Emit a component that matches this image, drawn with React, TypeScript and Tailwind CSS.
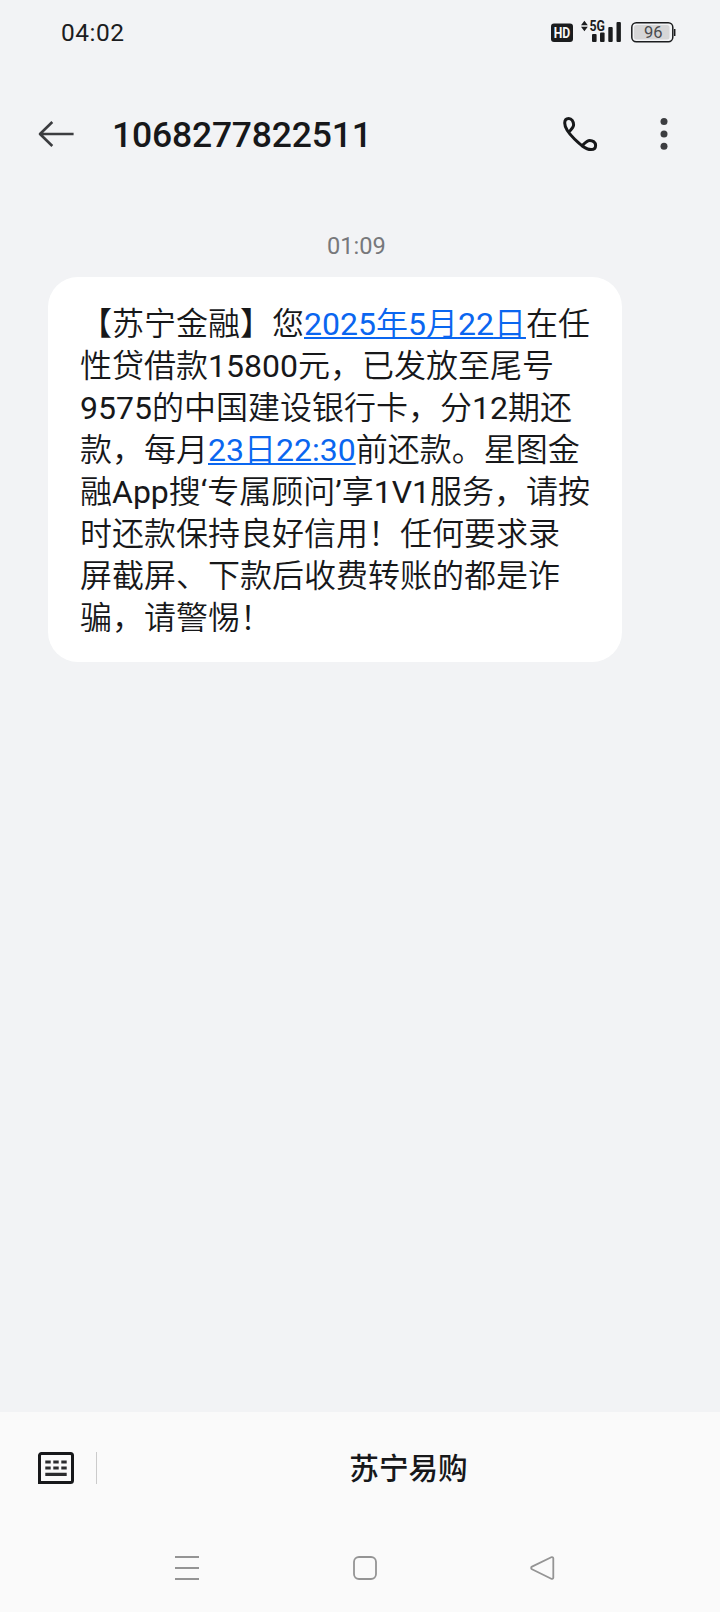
/* SMS thread: status bar, contact header, message bubble, service menu and system nav */

const PHONE_NUMBER = "1068277822511";

type Part = string | { link: string };

const MESSAGE: Part[][] = [
  ["【苏宁金融】您", { link: "2025年5月22日" }, "在任"],
  ["性贷借款15800元，已发放至尾号"],
  ["9575的中国建设银行卡，分12期还"],
  ["款，每月", { link: "23日22:30" }, "前还款。星图金"],
  ["融App搜‘专属顾问’享1V1服务，请按"],
  ["时还款保持良好信用！任何要求录"],
  ["屏截屏、下款后收费转账的都是诈"],
  ["骗，请警惕！"],
];

// Hanzi stay in the lighter weight, digits and latin letters go regular
const renderText = (text: string) =>
  text.split(/([0-9A-Za-z:‘’]+)/).map((part, i) =>
    i % 2 === 1 ? <span key={i} className="font-normal">{part}</span> : part
  );

function StatusBar() {
  return (
    <div className="flex h-16 shrink-0 items-center justify-between pl-[61px] pr-11">
      <span className="pt-[2px] text-[24.5px] leading-none tracking-[0.5px] text-[#1b1c1e]">04:02</span>
      <svg width="126" height="40" viewBox="550 12 126 40" aria-label="status">
        <rect x="551" y="23.5" width="22" height="18.5" rx="3" fill="#1b1c1e" />
        <text x="562" y="38.2" textAnchor="middle" fontSize="15" fontWeight="700" textLength="16.5" lengthAdjust="spacingAndGlyphs" fill="#f8f8f9">HD</text>
        <path d="M581 25.2l3.4-4.4 3.4 4.4zM581 26.8l3.4 4.4 3.4-4.4z" fill="#1b1c1e" />
        <rect x="592" y="34" width="4.6" height="8" rx="1" fill="#1b1c1e" />
        <rect x="600" y="32.5" width="4.6" height="9.5" rx="1" fill="#1b1c1e" />
        <rect x="608.3" y="27" width="4.4" height="15" rx="1" fill="#1b1c1e" />
        <rect x="616.5" y="22" width="4.4" height="20" rx="1" fill="#1b1c1e" />
        <text x="589.5" y="31" fontSize="14.5" fontWeight="700" textLength="15.5" lengthAdjust="spacingAndGlyphs" fill="#1b1c1e">5G</text>
        <rect x="631.8" y="22.8" width="41" height="19" rx="4.5" fill="#f2f3f5" stroke="#1b1c1e" strokeWidth="1.5" />
        <rect x="634" y="25" width="35.5" height="14.6" rx="2.5" fill="#d6d6d7" />
        <path d="M674.7 29v7" stroke="#1b1c1e" strokeWidth="1.5" />
        <text x="653.2" y="38.4" textAnchor="middle" fontSize="16.5" fontWeight="400" fill="#4a4b4d">96</text>
      </svg>
    </div>
  );
}

function Header() {
  return (
    <header className="flex h-[140px] shrink-0 items-center pl-9 pr-[52px]">
      <svg width="40" height="28" viewBox="0 0 40 28" fill="none" stroke="#3c3d40" strokeWidth="2.6">
        <path d="M37.6 14H4M16.3 2L4 14l12.3 12" strokeLinecap="butt" strokeLinejoin="round" />
      </svg>
      <h1 className="ml-9 flex-1 pt-[3px] text-[35.5px] leading-none font-medium tracking-[-0.2px] text-[#17181a]">
        {PHONE_NUMBER}
      </h1>
      <svg width="40" height="40" viewBox="0 0 40 40" fill="none" stroke="#17181a" strokeWidth="3" strokeLinecap="round" strokeLinejoin="round">
        <path d="M9.5 17.3C11.5 15.2 13.6 13.3 13.6 10.8C13.6 7.4 11.6 4.4 8.7 4.4C6.2 4.4 4.7 6.3 4.7 9C4.7 14.5 9.8 20.4 14.7 25.2C19.6 30 25.2 35.5 31 35.5C33.8 35.5 35.6 34 35.6 31.4C35.6 28.4 32.8 26.4 29.8 26.4C26.8 26.4 25 28.7 23 31" />
      </svg>
      <svg className="ml-[60px]" width="8" height="32" viewBox="0 0 8 32" fill="#3c3d40">
        <circle cx="4" cy="3.6" r="3.5" />
        <circle cx="4" cy="16" r="3.5" />
        <circle cx="4" cy="28.3" r="3.5" />
      </svg>
    </header>
  );
}

function MessageBubble() {
  return (
    <div className="ml-12 w-[574px] rounded-[30px] bg-white px-8 pt-[26px] pb-[23px] text-[32px] leading-[42px] font-[350] whitespace-nowrap text-[#17181a]">
      {MESSAGE.map((line, i) => (
        <p key={i}>
          {line.map((part, j) =>
            typeof part === "string" ? (
              <span key={j}>{renderText(part)}</span>
            ) : (
              <a key={j} className="text-[#0a66f0] underline decoration-[1.5px] underline-offset-[2px]">
                {renderText(part.link)}
              </a>
            )
          )}
        </p>
      ))}
    </div>
  );
}

function ServiceMenu() {
  return (
    <div className="flex h-28 items-center">
      <svg className="ml-[38px]" width="36" height="32" viewBox="0 0 36 32">
        <path d="M1.5 30.5v-27a2 2 0 0 1 2-2h29a2 2 0 0 1 2 2v25a2 2 0 0 1-2 2z" fill="none" stroke="#17181a" strokeWidth="3" />
        <path d="M7.3 10h5.4M15.3 10h5.4M23.3 10h5.4M7.3 16h5.4M15.3 16h5.4M23.3 16h5.4M7.3 22.3h21.4" stroke="#2b2c2e" strokeWidth="3.2" />
      </svg>
      <span className="ml-[22px] h-8 w-px bg-[#cbcbcb]" />
      <button className="flex-1 pt-[4px] text-center text-[29.6px] leading-none font-medium text-[#17181a]">苏宁易购</button>
    </div>
  );
}

function SystemNav() {
  return (
    <nav className="flex h-[88px] items-center pl-[174px]">
      <svg width="26" height="26" viewBox="0 0 26 26" stroke="#949494" strokeWidth="1.8">
        <path d="M1 2h24M1 13h24M1 24h24" />
      </svg>
      <svg className="ml-[152px]" width="26" height="26" viewBox="0 0 26 26" fill="none" stroke="#949494" strokeWidth="1.8">
        <rect x="2" y="2" width="22" height="22" rx="5" />
      </svg>
      <svg className="ml-[151px]" width="26" height="26" viewBox="0 0 26 26" fill="none" stroke="#949494" strokeWidth="1.8">
        <path d="M22.3 2.2L3 11.6a1.5 1.5 0 0 0 0 2.7L22.3 23.8a1.4 1.4 0 0 0 2-1.2V3.4a1.4 1.4 0 0 0-2-1.2z" />
      </svg>
    </nav>
  );
}

export default function App() {
  return (
    <div className="flex h-[1612px] w-[720px] flex-col overflow-hidden bg-[#f2f3f5] font-[Roboto,'Noto_Sans_CJK_SC',sans-serif]">
      <StatusBar />
      <Header />
      <main className="flex-1">
        <div className="flex h-[73px] items-center pt-[12px] pl-[327px]">
          <time className="text-[23.6px] leading-none font-normal text-[#77787b]">01:09</time>
        </div>
        <MessageBubble />
      </main>
      <footer className="h-[200px] shrink-0 bg-[#fafafa]">
        <ServiceMenu />
        <SystemNav />
      </footer>
    </div>
  );
}
